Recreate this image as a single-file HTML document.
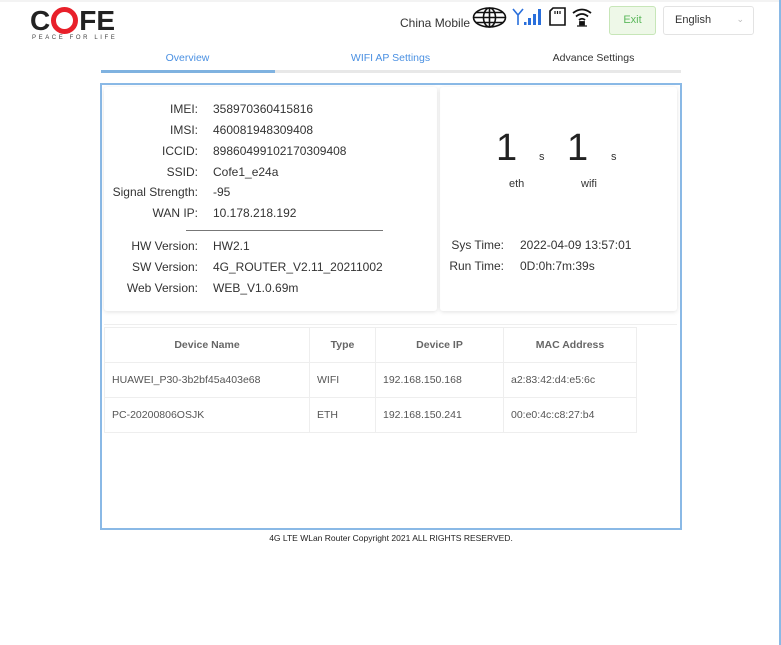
<!DOCTYPE html>
<html><head><meta charset="utf-8"><style>
*{margin:0;padding:0;box-sizing:border-box}
body{width:781px;height:645px;background:#fff;font-family:"Liberation Sans",Arial,sans-serif;color:#333;position:relative;overflow:hidden}
.a{position:absolute}
.lbl{position:absolute;text-align:right;font-size:12px;color:#333;white-space:nowrap}
.val{position:absolute;font-size:12px;color:#333;white-space:nowrap}
table{border-collapse:collapse;font-size:10.5px;table-layout:fixed}
td,th{border:1px solid #eee;height:35px;padding:0 7px;color:#555;font-weight:normal}
th{color:#666;font-weight:bold;text-align:center}
</style></head><body>
<div class="a" style="left:0;top:0;width:781px;height:2px;background:#f3f3f3"></div>
<div class="a" style="right:0;top:0;width:2px;height:645px;background:#8ab9e6"></div>
<!-- logo -->
<div class="a" style="left:30px;top:5px;font:900 28px 'Liberation Sans',sans-serif;letter-spacing:0px;color:#222">C<span style="display:inline-block;width:27px;height:27px;border-radius:50%;border:5px solid #e8202a;vertical-align:-4px;margin:0 1px"></span>FE</div>
<div class="a" style="left:32px;top:35px;font-size:6px;letter-spacing:2.6px;color:#444">PEACE FOR LIFE</div>
<div class="a" style="left:400px;top:16px;font-size:12px;color:#333">China Mobile</div>
<svg class="a" style="left:472px;top:7px" width="35" height="21" viewBox="0 0 35 21" fill="none" stroke="#111" stroke-width="1.6"><ellipse cx="17.5" cy="10.5" rx="16" ry="9.5"/><ellipse cx="17.5" cy="10.5" rx="6" ry="9.5"/><line x1="17.5" y1="1" x2="17.5" y2="20"/><line x1="1.5" y1="10.5" x2="33.5" y2="10.5"/><line x1="4" y1="5.5" x2="31" y2="5.5"/><line x1="4" y1="15.5" x2="31" y2="15.5"/></svg>
<svg class="a" style="left:512px;top:8px" width="30" height="18" viewBox="0 0 30 18"><path d="M1 1L6 7L11 1M6 7V17" stroke="#2a6fdb" stroke-width="1.6" fill="none"/><rect x="12" y="14" width="2.5" height="3" fill="#2a6fdb"/><rect x="16" y="10" width="3" height="7" fill="#2a6fdb"/><rect x="21" y="6" width="3" height="11" fill="#2a6fdb"/><rect x="26" y="1" width="3" height="16" fill="#2a6fdb"/></svg>
<svg class="a" style="left:548px;top:7px" width="19" height="20" viewBox="0 0 19 20"><path d="M5 1H17V18H2V4Z" stroke="#111" stroke-width="1.6" fill="none"/><path d="M7 4v3M9.5 4v3M12 4v3" stroke="#111" stroke-width="1.2"/></svg>
<svg class="a" style="left:572px;top:7px" width="20" height="20" viewBox="0 0 20 20" fill="none" stroke="#111" stroke-width="1.8"><path d="M1 6Q10 -1 19 6"/><path d="M4 9.5Q10 4.5 16 9.5"/><path d="M7 13Q10 10.5 13 13"/><rect x="8" y="15" width="4" height="2.5" fill="#111"/><line x1="5" y1="19" x2="15" y2="19" stroke-width="1.2"/></svg>
<div class="a" style="left:609px;top:6px;width:47px;height:29px;border:1px solid #c7e6b8;background:#eef8e8;border-radius:3px;color:#5cb85c;font-size:11px;text-align:center;line-height:27px">Exit</div>
<div class="a" style="left:663px;top:6px;width:91px;height:29px;border:1px solid #e3e3e3;border-radius:3px;font-size:11px;color:#333;padding-left:11px;line-height:27px">English<span style="position:absolute;right:9px;top:-1px;color:#bbb;font-size:9px">&#8964;</span></div>
<!-- tabs -->
<div class="a" style="left:101px;top:52px;width:173px;text-align:center;font-size:10.5px;color:#4a90e2">Overview</div>
<div class="a" style="left:304px;top:52px;width:173px;text-align:center;font-size:10.5px;color:#4a90e2">WIFI AP Settings</div>
<div class="a" style="left:507px;top:52px;width:173px;text-align:center;font-size:10.5px;color:#333">Advance Settings</div>
<div class="a" style="left:101px;top:70px;width:580px;height:3px;background:#e8e8e8"></div>
<div class="a" style="left:101px;top:70px;width:174px;height:3px;background:#7fb2e0"></div>
<!-- panel -->
<div class="a" style="left:100px;top:83px;width:582px;height:447px;border:2px solid #8ab9e6"></div>
<div class="a" style="left:104px;top:87px;width:333px;height:224px;box-shadow:0 1px 4px rgba(0,0,0,.12);border-radius:3px"></div>
<div class="a" style="left:440px;top:87px;width:237px;height:224px;box-shadow:0 1px 4px rgba(0,0,0,.12);border-radius:3px"></div>
<div class="lbl" style="right:583px;top:102px">IMEI:</div><div class="val" style="left:213px;top:102px">358970360415816</div>
<div class="lbl" style="right:583px;top:123px">IMSI:</div><div class="val" style="left:213px;top:123px">460081948309408</div>
<div class="lbl" style="right:583px;top:144px">ICCID:</div><div class="val" style="left:213px;top:144px">89860499102170309408</div>
<div class="lbl" style="right:583px;top:165px">SSID:</div><div class="val" style="left:213px;top:165px">Cofe1_e24a</div>
<div class="lbl" style="right:583px;top:185px">Signal Strength:</div><div class="val" style="left:213px;top:185px">-95</div>
<div class="lbl" style="right:583px;top:206px">WAN IP:</div><div class="val" style="left:213px;top:206px">10.178.218.192</div>
<div class="a" style="left:186px;top:230px;width:197px;height:1px;background:#777"></div>
<div class="lbl" style="right:583px;top:239px">HW Version:</div><div class="val" style="left:213px;top:239px">HW2.1</div>
<div class="lbl" style="right:583px;top:260px">SW Version:</div><div class="val" style="left:213px;top:260px">4G_ROUTER_V2.11_20211002</div>
<div class="lbl" style="right:583px;top:281px">Web Version:</div><div class="val" style="left:213px;top:281px">WEB_V1.0.69m</div>
<div class="a" style="left:496px;top:127px;font-size:38px;color:#222">1</div>
<div class="a" style="left:539px;top:151px;font-size:11px">s</div>
<div class="a" style="left:567px;top:127px;font-size:38px;color:#222">1</div>
<div class="a" style="left:611px;top:151px;font-size:11px">s</div>
<div class="a" style="left:509px;top:178px;font-size:11px">eth</div>
<div class="a" style="left:581px;top:178px;font-size:11px">wifi</div>
<div class="lbl" style="right:277px;top:238px">Sys Time:</div><div class="val" style="left:520px;top:238px">2022-04-09 13:57:01</div>
<div class="lbl" style="right:277px;top:259px">Run Time:</div><div class="val" style="left:520px;top:259px">0D:0h:7m:39s</div>
<div class="a" style="left:104px;top:324px;width:573px;height:1px;background:#eee"></div>
<table class="a" style="left:104px;top:327px;width:532px">
<tr><th style="width:205px">Device Name</th><th style="width:66px">Type</th><th style="width:128px">Device IP</th><th style="width:133px">MAC Address</th></tr>
<tr><td>HUAWEI_P30-3b2bf45a403e68</td><td>WIFI</td><td>192.168.150.168</td><td>a2:83:42:d4:e5:6c</td></tr>
<tr><td>PC-20200806OSJK</td><td>ETH</td><td>192.168.150.241</td><td>00:e0:4c:c8:27:b4</td></tr>
</table>
<div class="a" style="left:100px;top:533px;width:582px;text-align:center;font-size:8.5px;color:#222">4G LTE WLan Router Copyright 2021 ALL RIGHTS RESERVED.</div>
</body></html>
